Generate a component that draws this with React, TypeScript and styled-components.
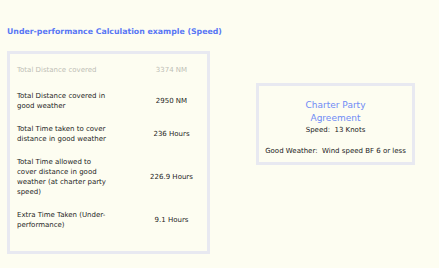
import React from 'react';
import styled, { createGlobalStyle } from 'styled-components';
import type { ReactElement } from 'react';

const GlobalStyle = createGlobalStyle`
  html, body {
    margin: 0;
    padding: 0;
    background: #fdfdf1;
  }
  body {
    font-family: 'DejaVu Sans', 'Open Sans', sans-serif;
  }
`;

const Page = styled.div`
  padding: 26px 7px 14px;
  min-height: 268px;
  box-sizing: border-box;
`;

const Title = styled.h1`
  margin: 0 0 13px;
  font-size: 7.8px;
  line-height: 12px;
  font-weight: 700;
  color: #5877f5;
`;

const Content = styled.div`
  display: flex;
  align-items: flex-start;
  gap: 46px;
`;

const Panel = styled.div`
  border: 3px solid #e8e9f1;
  box-sizing: border-box;
`;

const Table = styled(Panel)`
  width: 203px;
  height: 203px;
  padding: 11px 7px 0 7px;
  display: flex;
  flex-direction: column;
  gap: 13px;
`;

const Row = styled.div<{ $muted?: boolean }>`
  display: grid;
  grid-template-columns: 93px 1fr;
  align-items: center;
  font-size: 7px;
  line-height: 10px;
  color: ${({ $muted }) => ($muted ? '#bdbdb6' : '#1e1e1e')};
  margin-bottom: ${({ $muted }) => ($muted ? '3px' : '0')};
`;

const Value = styled.div`
  text-align: center;
  padding-left: 33px;
`;

const Agreement = styled(Panel)`
  margin-top: 32px;
  width: 159px;
  height: 82px;
  padding: 13px 4px 0;
  text-align: center;
  color: #222;
`;

const Heading = styled.div`
  font-size: 9px;
  line-height: 13px;
  color: #6f8bf6;
`;

const Line = styled.div<{ $gap?: number }>`
  font-size: 7px;
  line-height: 10px;
  margin-top: ${({ $gap }) => $gap ?? 0}px;
  white-space: pre;
`;

const rows = [
  { label: 'Total Distance covered', value: '3374 NM', muted: true },
  { label: 'Total Distance covered in good weather', value: '2950 NM' },
  { label: 'Total Time taken to cover distance in good weather', value: '236 Hours' },
  {
    label: 'Total Time allowed to cover distance in good weather (at charter party speed)',
    value: '226.9 Hours',
  },
  { label: 'Extra Time Taken (Under-performance)', value: '9.1 Hours' },
];

const App = (): ReactElement => (
  <>
    <GlobalStyle />
    <Page>
      <Title>Under-performance Calculation example (Speed)</Title>
      <Content>
        <Table>
          {rows.map((row) => (
            <Row key={row.label} $muted={row.muted}>
              <div>{row.label}</div>
              <Value>{row.value}</Value>
            </Row>
          ))}
        </Table>
        <Agreement>
          <Heading>
            Charter Party
            <br />
            Agreement
          </Heading>
          <Line>Speed:  13 Knots</Line>
          <Line $gap={11}>Good Weather:  Wind speed BF 6 or less</Line>
        </Agreement>
      </Content>
    </Page>
  </>
);

export default App;
